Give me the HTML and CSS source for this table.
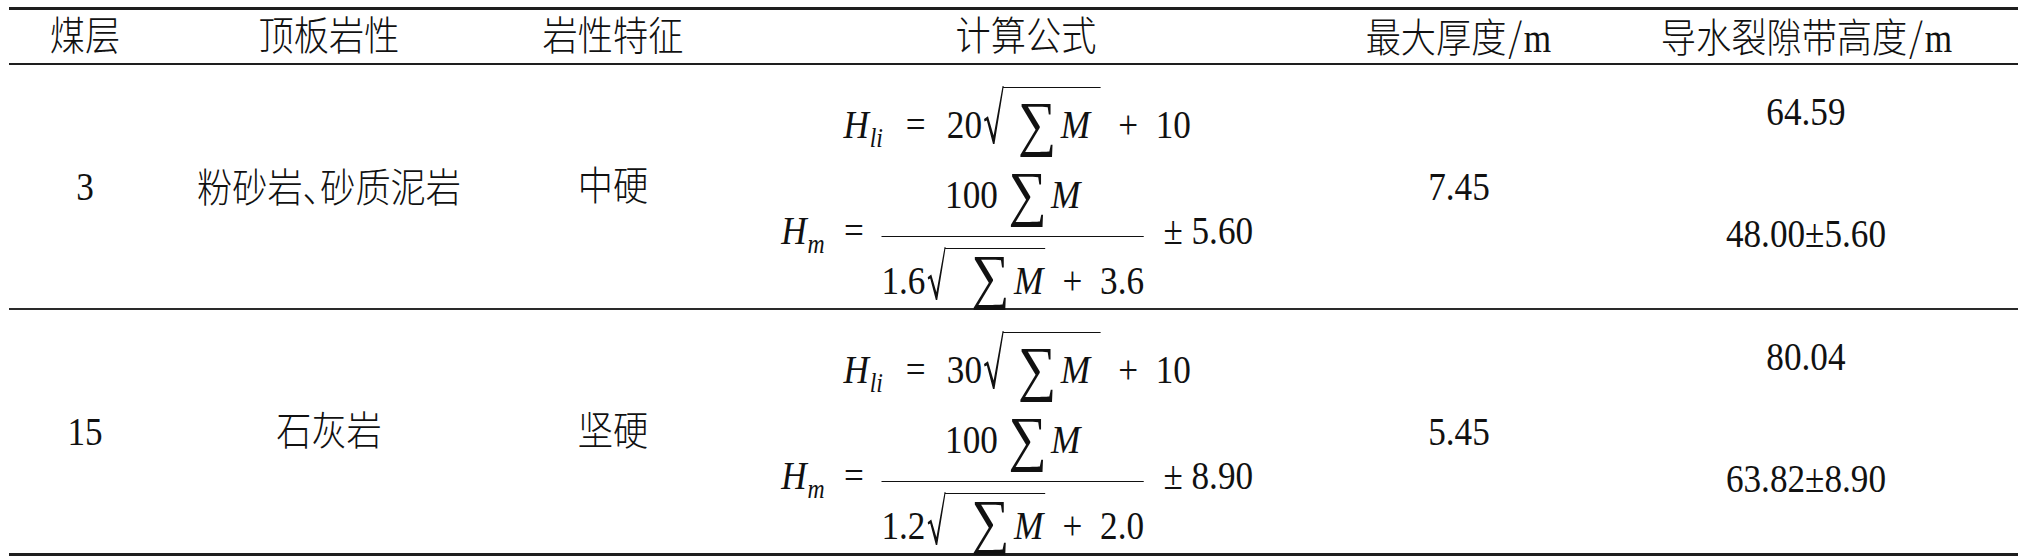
FILE: index.html
```html
<!DOCTYPE html>
<html lang="zh">
<head>
<meta charset="utf-8">
<title>导水裂隙带高度计算</title>
<link rel="stylesheet" href="styles.css">
</head>
<body>
<div class="tbl">
  <div class="row head">
    <div class="c"><span class="t">煤层</span></div>
    <div class="c"><span class="t">顶板岩性</span></div>
    <div class="c"><span class="t">岩性特征</span></div>
    <div class="c"><span class="t">计算公式</span></div>
    <div class="c"><span class="t">最大厚度<span class="sl">/</span>m</span></div>
    <div class="c"><span class="t">导水裂隙带高度<span class="sl">/</span>m</span></div>
  </div>

  <div class="row data sep">
    <div class="c"><span class="t">3</span></div>
    <div class="c"><span class="t">粉砂岩<span class="dun">、</span>砂质泥岩</span></div>
    <div class="c"><span class="t">中硬</span></div>
    <div class="c fcell">
      <div class="t stack">
        <div class="eq1"><i class="v">H</i><sub class="s">li</sub><span class="op o1">=</span>20<span class="rad"><svg class="rs" viewBox="0 0 23 58" width="23" height="58"><polygon points="0.5,33 5,30.2 11.4,49.5 21.6,0 23,0 12.4,58 10.7,58 3.7,34.6 1.1,35.6"/></svg><span class="rc"><span class="sum">∑</span><i class="v">M</i></span></span><span class="op">+</span>10</div>
        <div class="eq2">
          <span class="side"><i class="v">H</i><sub class="s">m</sub></span>
          <span class="side eqs">=</span>
          <span class="frac">
            <span class="nu">100<span class="sum">∑</span><i class="v">M</i></span>
            <span class="de">1.6<span class="rad sm"><svg class="rs" viewBox="0 0 23 58" width="21" height="53" preserveAspectRatio="none"><polygon points="0.5,33 5,30.2 11.4,49.5 21.6,0 23,0 12.4,58 10.7,58 3.7,34.6 1.1,35.6"/></svg><span class="rc"><span class="sum">∑</span><i class="v">M</i></span></span><span class="op">+</span>3.6</span>
          </span>
          <span class="side pm">± 5.60</span>
        </div>
      </div>
    </div>
    <div class="c"><span class="t">7.45</span></div>
    <div class="c vals"><div class="t stack"><div>64.59</div><div>48.00±5.60</div></div></div>
  </div>

  <div class="row data">
    <div class="c"><span class="t">15</span></div>
    <div class="c"><span class="t">石灰岩</span></div>
    <div class="c"><span class="t">坚硬</span></div>
    <div class="c fcell">
      <div class="t stack">
        <div class="eq1"><i class="v">H</i><sub class="s">li</sub><span class="op o1">=</span>30<span class="rad"><svg class="rs" viewBox="0 0 23 58" width="23" height="58"><polygon points="0.5,33 5,30.2 11.4,49.5 21.6,0 23,0 12.4,58 10.7,58 3.7,34.6 1.1,35.6"/></svg><span class="rc"><span class="sum">∑</span><i class="v">M</i></span></span><span class="op">+</span>10</div>
        <div class="eq2">
          <span class="side"><i class="v">H</i><sub class="s">m</sub></span>
          <span class="side eqs">=</span>
          <span class="frac">
            <span class="nu">100<span class="sum">∑</span><i class="v">M</i></span>
            <span class="de">1.2<span class="rad sm"><svg class="rs" viewBox="0 0 23 58" width="21" height="53" preserveAspectRatio="none"><polygon points="0.5,33 5,30.2 11.4,49.5 21.6,0 23,0 12.4,58 10.7,58 3.7,34.6 1.1,35.6"/></svg><span class="rc"><span class="sum">∑</span><i class="v">M</i></span></span><span class="op">+</span>2.0</span>
          </span>
          <span class="side pm">± 8.90</span>
        </div>
      </div>
    </div>
    <div class="c"><span class="t">5.45</span></div>
    <div class="c vals"><div class="t stack"><div>80.04</div><div>63.82±8.90</div></div></div>
  </div>
</div>
</body>
</html>
```

FILE: styles.css
```css
html, body {
  margin: 0;
  padding: 0;
  background: #fff;
}

body {
  font-family: "Liberation Serif", "Noto Sans CJK SC", serif;
  font-size: 40px;
  color: #111;
}

.tbl {
  width: 2009px;
  margin: 7px 0 0 9px;
  border-top: 3px solid #1e1e1e;
  border-bottom: 3px solid #1e1e1e;
}

.row {
  display: grid;
  grid-template-columns: 152px 336px 231px 595px 271px 424px;
}

.head {
  height: 53px;
  border-bottom: 2px solid #1e1e1e;
}

.data {
  height: 243px;
}

.sep {
  border-bottom: 2px solid #2a2a2a;
}

.c {
  display: flex;
  align-items: center;
  justify-content: center;
  line-height: 40px;
  white-space: nowrap;
  font-weight: 300;
}

/* the source table is set slightly condensed */
.t {
  display: inline-block;
  transform: scaleX(0.88);
}

.stack {
  display: flex;
  flex-direction: column;
  align-items: center;
}

.sl {
  font-family: "Noto Sans CJK SC", sans-serif;
  font-weight: 300;
  margin: 0 2px;
}

.dun {
  font-family: "Noto Sans CJK SC", sans-serif;
  font-feature-settings: "halt";
}

/* formulas */
.fcell {
  align-items: flex-start;
  padding-top: 21px;
  padding-right: 16px;
}

.eq1 {
  line-height: 40px;
  height: 59px;
}

.v {
  font-style: italic;
}

.s {
  font-size: 27px;
  font-style: italic;
  line-height: 0;
  vertical-align: -9px;
  margin-left: 1px;
}

.op {
  margin: 0 20px;
}

.op.o1 {
  margin: 0 24px 0 26px;
}

.rad {
  display: inline-block;
  margin-left: 2px;
}

.rs {
  vertical-align: -6px;
  fill: #111;
}

.rc {
  display: inline-block;
  border-top: 1.6px solid #111;
  padding: 17px 12px 0 17px;
  margin-left: -1px;
}

.sum {
  display: inline-block;
  font-size: 61px;
  line-height: 28px;
  vertical-align: -6px;
  margin-right: 5px;
}

.eq2 {
  display: flex;
  align-items: center;
  margin-top: 30px;
}

.side {
  padding-bottom: 13px;
  line-height: 40px;
}

.eqs {
  margin: 0 20px 0 22px;
}

.frac {
  display: flex;
  flex-direction: column;
  align-items: center;
}

.nu {
  line-height: 40px;
  height: 40px;
  padding-bottom: 20.5px;
}

.nu .sum {
  margin-left: 12px;
}

.de {
  line-height: 40px;
  border-top: 1.5px solid #111;
  padding-top: 10px;
  height: 53.6px;
}

.de .sum {
  vertical-align: -3px;
}

.de .op {
  margin: 0 20px;
}

.rad.sm .rc {
  padding: 12px 2px 0 30px;
}

.pm {
  margin-left: 22px;
}

.vals {
  align-items: flex-start;
  padding-top: 27px;
}

.vals .stack {
  gap: 82px;
}
```
